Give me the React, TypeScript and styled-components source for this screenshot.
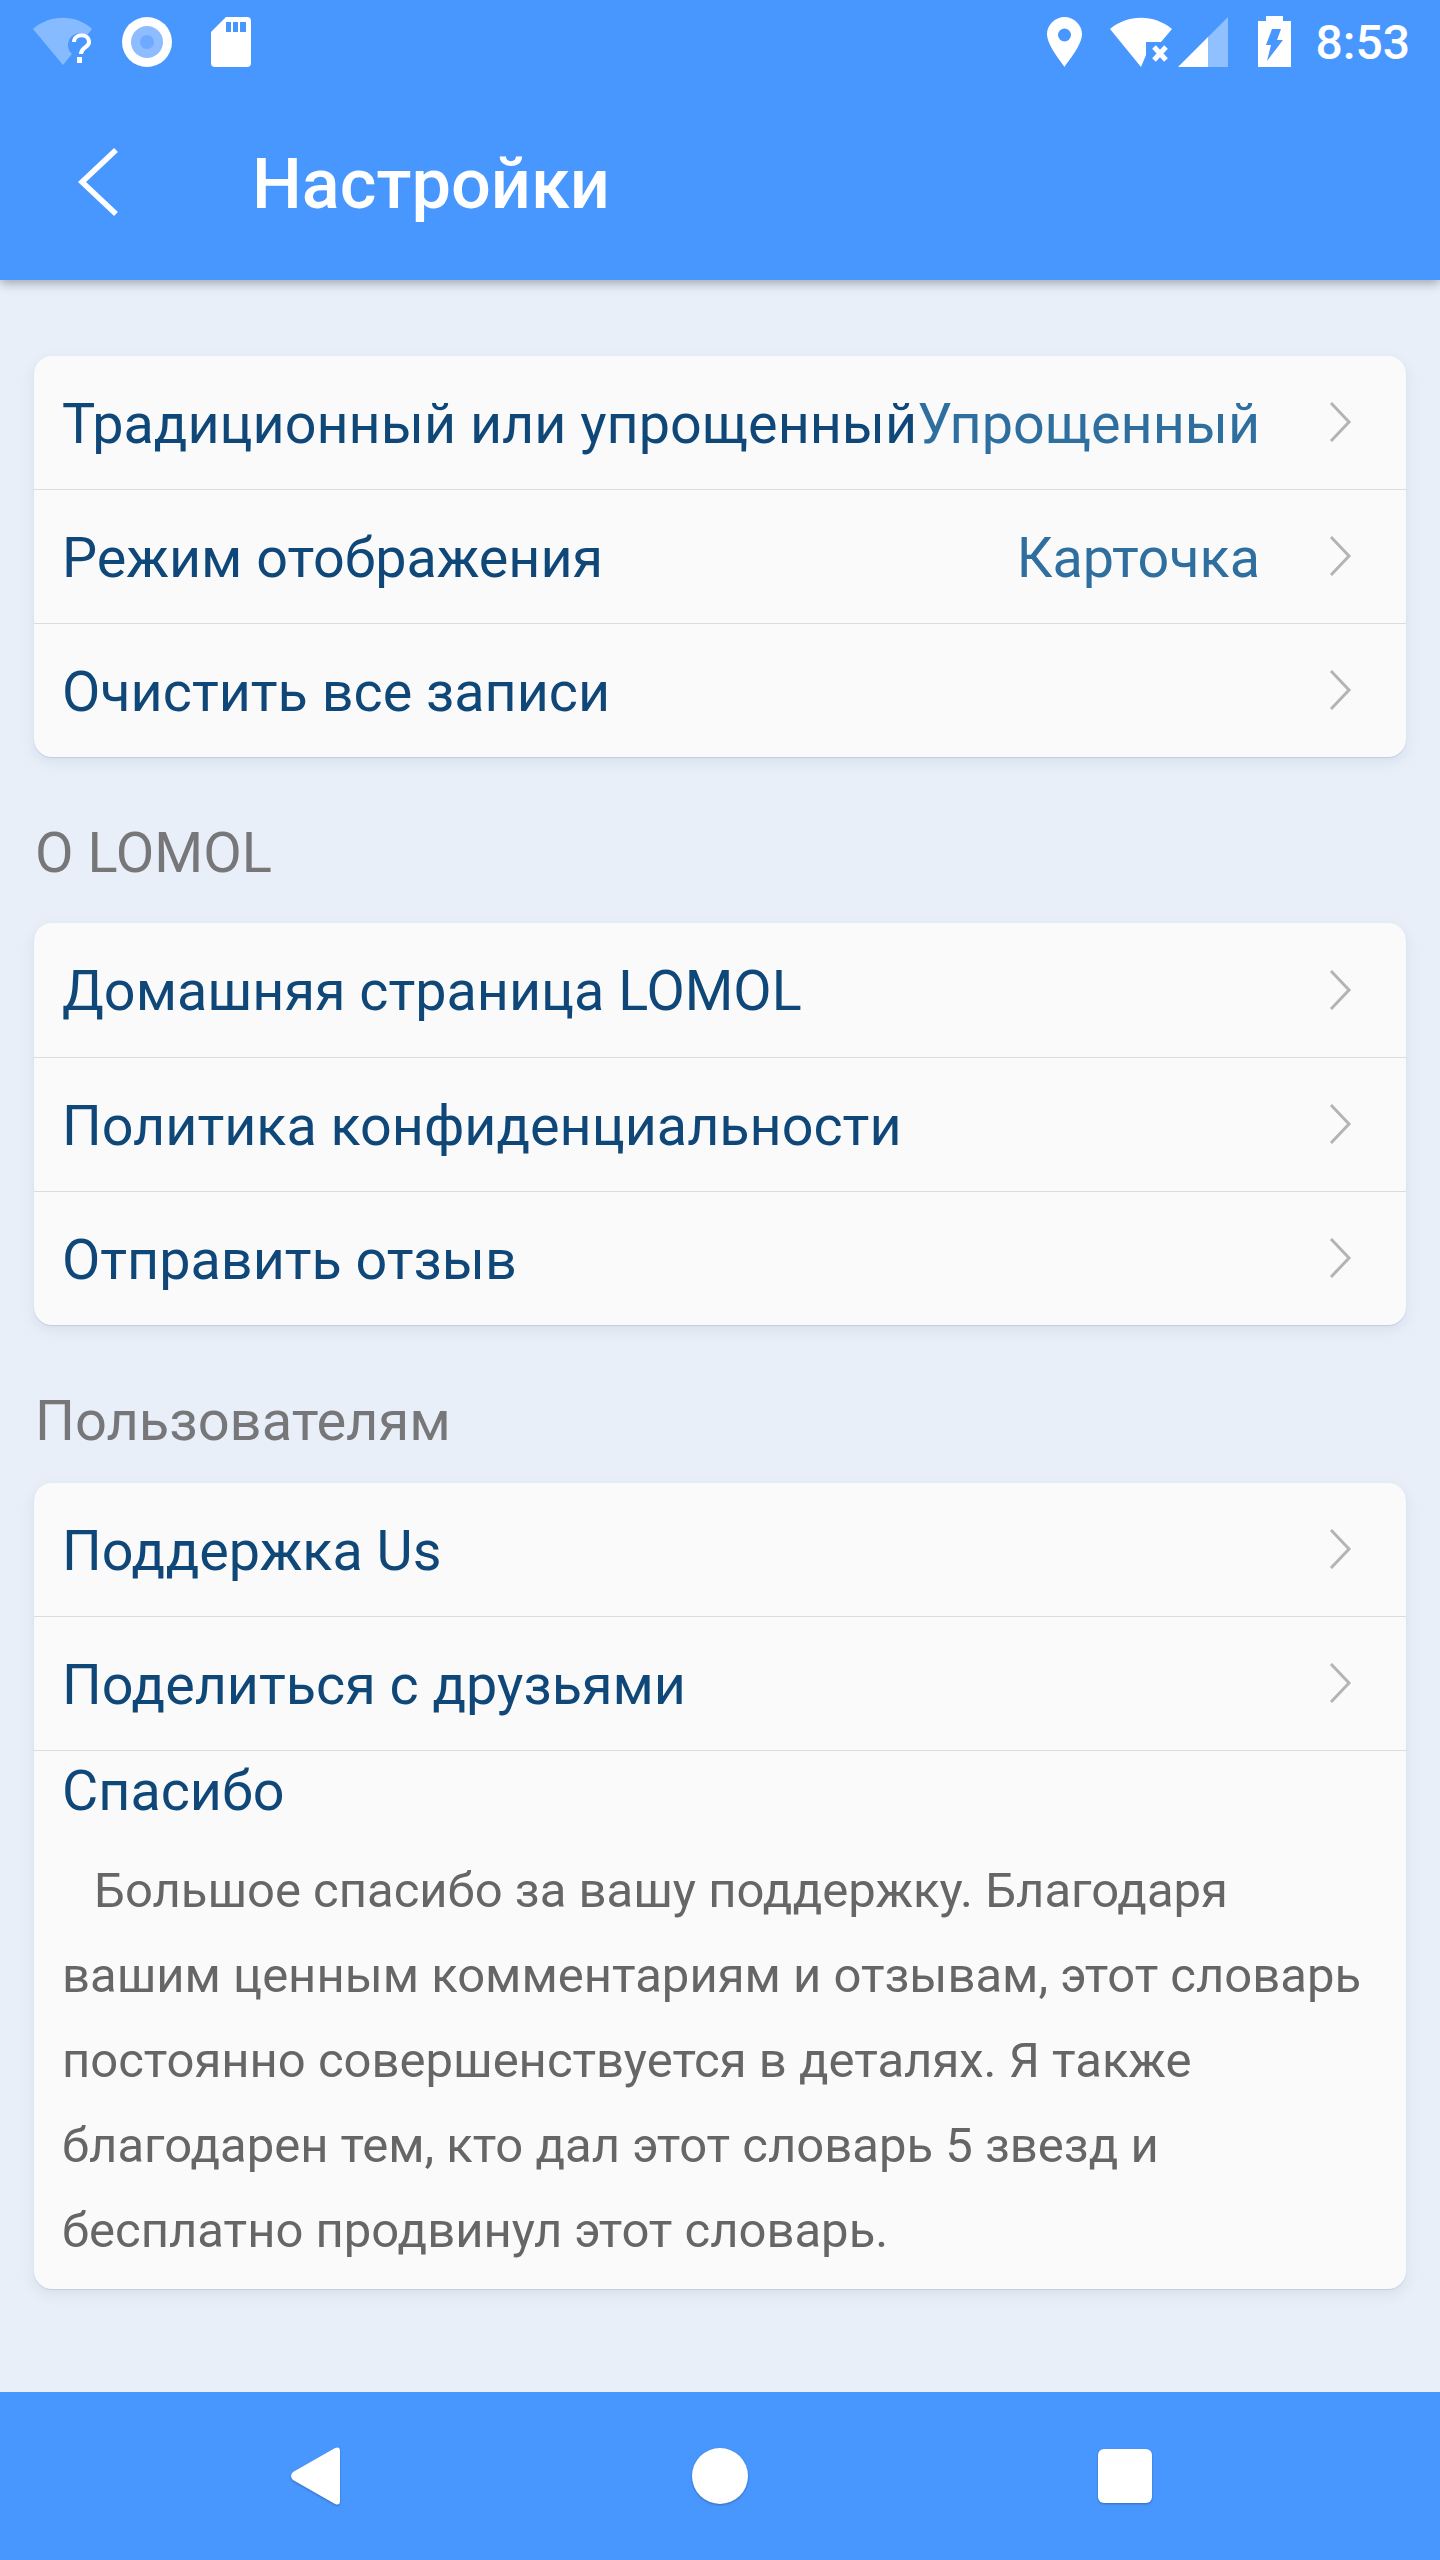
import React, { FC } from "react";
import styled, { createGlobalStyle } from "styled-components";

const Colors = {
  blue: "#4897ff",
  page: "#e8eff8",
  card: "#fafafa",
  line: "#dcdcdc",
  title: "#0f4778",
  value: "#2f6f9f",
  label: "#77777a",
  body: "#666666",
  chevron: "#b4b4b4",
};

const GlobalStyle = createGlobalStyle`
  html, body {
    margin: 0;
    padding: 0;
    background: ${Colors.page};
    font-family: Roboto, "Noto Sans", sans-serif;
  }
`;

const Screen = styled.div`
  width: 1440px;
  height: 2560px;
  display: flex;
  flex-direction: column;
  overflow: hidden;
  background: ${Colors.page};
`;

const Header = styled.header`
  height: 280px;
  flex: none;
  background: ${Colors.blue};
  box-shadow: 0 3px 10px rgba(40, 50, 70, 0.4);
  position: relative;
  z-index: 1;
`;

const StatusBar = styled.div`
  height: 84px;
  display: flex;
  align-items: center;
  justify-content: space-between;
  padding: 0 30px 0 33px;
`;

const StatusGroup = styled.div`
  display: flex;
  align-items: center;
`;

const Clock = styled.span`
  color: #fff;
  font-size: 48px;
  font-weight: 500;
  line-height: 84px;
  padding-top: 2px;
  margin-left: 24px;
`;

const AppBar = styled.div`
  height: 196px;
  display: flex;
  align-items: center;
  padding-left: 76px;
  box-sizing: border-box;
`;

const Title = styled.h1`
  margin: 0 0 0 132px;
  padding-top: 4px;
  color: #fff;
  font-size: 70.3px;
  font-weight: 500;
`;

const Content = styled.main`
  flex: 1;
  padding: 76px 34px 0;
  display: flex;
  flex-direction: column;
`;

const Card = styled.section`
  background: ${Colors.card};
  border-radius: 18px;
  box-shadow:
    0 1px 1px rgba(60, 80, 120, 0.14),
    0 5px 14px rgba(60, 90, 140, 0.1);
  overflow: hidden;
`;

const Row = styled.div<{ $first: boolean; $tall: boolean }>`
  height: ${({ $first, $tall }) => ($first && !$tall ? 133 : 134)}px;
  box-sizing: border-box;
  display: flex;
  align-items: center;
  padding: 2px 54px 0 28px;
  border-top: ${({ $first }) => ($first ? "none" : `1px solid ${Colors.line}`)};
`;

const RowTitle = styled.span`
  color: ${Colors.title};
  font-size: 55.7px;
  white-space: nowrap;
`;

const RowValue = styled.span`
  color: ${Colors.value};
  font-size: 55.7px;
  margin-left: auto;
  white-space: nowrap;
`;

const Chevron = styled.svg<{ $pushed: boolean }>`
  flex: none;
  width: 24px;
  height: 42px;
  margin: -3px 0 0 ${({ $pushed }) => ($pushed ? "auto" : "68px")};
`;

const SectionLabel = styled.h2<{ $height: number }>`
  margin: 0;
  height: ${({ $height }) => $height}px;
  box-sizing: border-box;
  padding: 63px 0 0 1px;
  color: ${Colors.label};
  font-size: 56px;
  font-weight: 400;
`;

const ThanksBlock = styled.div`
  border-top: 1px solid ${Colors.line};
  padding: 0 40px 16px 28px;
`;

const ThanksTitle = styled.h3`
  margin: 0;
  color: ${Colors.title};
  font-size: 55.7px;
  font-weight: 400;
  line-height: 80px;
`;

const ThanksText = styled.p`
  margin: 17px 0 0;
  color: ${Colors.body};
  font-size: 49px;
  line-height: 85px;
  text-indent: 32px;
`;

const NavBar = styled.nav`
  height: 168px;
  flex: none;
  background: ${Colors.blue};
  display: flex;
  align-items: center;
  justify-content: center;
`;

const NavSlot = styled.div`
  width: 405px;
  display: flex;
  justify-content: center;
`;

const NavIcon = styled.svg`
  display: block;
  filter: drop-shadow(0 1px 1px rgba(30, 50, 90, 0.45));
`;

const ChevronIcon: FC<{ pushed: boolean }> = ({ pushed }) => (
  <Chevron $pushed={pushed} viewBox="0 0 24 42">
    <path d="M3 2 L21 21 L3 40" fill="none" stroke={Colors.chevron} strokeWidth="3" />
  </Chevron>
);

type Item = { title: string; value?: string };

const Rows: FC<{ items: Item[]; tall?: boolean }> = ({ items, tall = false }) => (
  <>
    {items.map((item, index) => (
      <Row key={item.title} $first={index === 0} $tall={tall}>
        <RowTitle>{item.title}</RowTitle>
        {item.value ? <RowValue>{item.value}</RowValue> : null}
        <ChevronIcon pushed={!item.value} />
      </Row>
    ))}
  </>
);

const LeftStatusIcons = () => (
  <svg width="220" height="54" viewBox="33 15 220 54">
    <path d="M33 29 C50 14 76 14 92 29 L63 65 Z" fill="#fff" fillOpacity="0.35" />
    <circle cx="80" cy="45" r="12" fill={Colors.blue} />
    <path
      d="M74 42 C74 33 89 33 89 42 C89 48 81 47 81 54"
      fill="none"
      stroke="#fff"
      strokeWidth="4"
    />
    <rect x="77" y="57" width="5" height="6" fill="#fff" />
    <circle cx="147" cy="42" r="25" fill="#fff" />
    <circle cx="147" cy="42" r="16" fill="#8dbcff" />
    <circle cx="147" cy="42" r="7" fill="#6eaaff" />
    <path
      d="M226 17 H247 Q251 17 251 21 V63 Q251 67 247 67 H215 Q211 67 211 63 V32 Z"
      fill="#fff"
    />
    <path d="M226 22 h5 v10 h-5 z M233 22 h5 v10 h-5 z M240 22 h6 v10 h-6 z" fill={Colors.blue} />
  </svg>
);

const RightStatusIcons = () => (
  <svg width="246" height="54" viewBox="1045 15 246 54">
    <path
      d="M1063.5 17 C1073 17 1081 25 1081 34 C1081 45 1068 60 1063.5 67 C1059 60 1046 45 1046 34 C1046 25 1054 17 1063.5 17 Z"
      fill="#fff"
    />
    <circle cx="1063.5" cy="35" r="6.5" fill={Colors.blue} />
    <path d="M1109 29 C1127 14 1153 14 1171 29 L1160 42 H1145 V55 L1140 67 Z" fill="#fff" />
    <path
      d="M1153 47 L1165 60 M1165 47 L1153 60"
      stroke="#fff"
      strokeWidth="5"
      fill="none"
    />
    <path d="M1177 67 L1207 37 V67 Z" fill="#fff" />
    <path d="M1207 37 L1227 17 V67 H1207 Z" fill="#fff" fillOpacity="0.4" />
    <path d="M1265 16 H1282 V21 H1290 V67 H1257 V21 H1265 Z" fill="#fff" />
    <path d="M1271 29 H1280 L1276 40 H1282 L1266 61 L1270 45 H1265 Z" fill={Colors.blue} />
  </svg>
);

const BackIcon = () => (
  <svg width="44" height="70" viewBox="0 0 44 70">
    <path d="M40 3 L6 35 L40 67" fill="none" stroke="#fff" strokeWidth="5.5" />
  </svg>
);

export default function App() {
  return (
    <Screen>
      <GlobalStyle />
      <Header>
        <StatusBar>
          <StatusGroup>
            <LeftStatusIcons />
          </StatusGroup>
          <StatusGroup>
            <RightStatusIcons />
            <Clock>8:53</Clock>
          </StatusGroup>
        </StatusBar>
        <AppBar>
          <BackIcon />
          <Title>Настройки</Title>
        </AppBar>
      </Header>
      <Content>
        <Card>
          <Rows
            items={[
              { title: "Традиционный или упрощенный", value: "Упрощенный" },
              { title: "Режим отображения", value: "Карточка" },
              { title: "Очистить все записи" },
            ]}
          />
        </Card>
        <SectionLabel $height={166}>О LOMOL</SectionLabel>
        <Card>
          <Rows
            tall
            items={[
              { title: "Домашняя страница LOMOL" },
              { title: "Политика конфиденциальности" },
              { title: "Отправить отзыв" },
            ]}
          />
        </Card>
        <SectionLabel $height={158}>Пользователям</SectionLabel>
        <Card>
          <Rows items={[{ title: "Поддержка Us" }, { title: "Поделиться с друзьями" }]} />
          <ThanksBlock>
            <ThanksTitle>Спасибо</ThanksTitle>
            <ThanksText>
              Большое спасибо за вашу поддержку. Благодаря вашим ценным комментариям и отзывам,
              этот словарь постоянно совершенствуется в деталях. Я также благодарен тем, кто дал
              этот словарь 5 звезд и бесплатно продвинул этот словарь.
            </ThanksText>
          </ThanksBlock>
        </Card>
      </Content>
      <NavBar>
        <NavSlot>
          <NavIcon width="51" height="58" viewBox="0 0 51 58">
            <path d="M45 1 Q50 -1 50 4 V54 Q50 59 45 57 L3 33 Q-1 29 3 25 Z" fill="#fff" />
          </NavIcon>
        </NavSlot>
        <NavSlot>
          <NavIcon width="58" height="58" viewBox="0 0 58 58">
            <circle cx="29" cy="29" r="28" fill="#fff" />
          </NavIcon>
        </NavSlot>
        <NavSlot>
          <NavIcon width="54" height="54" viewBox="0 0 54 54">
            <rect x="0" y="0" width="54" height="54" rx="6" fill="#fff" />
          </NavIcon>
        </NavSlot>
      </NavBar>
    </Screen>
  );
}
